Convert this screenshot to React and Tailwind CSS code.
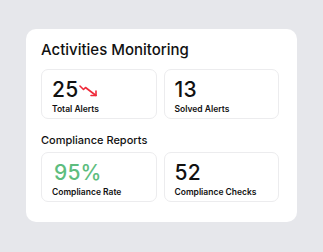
const font = { fontFamily: 'Inter, "Noto Sans", sans-serif' }

function TrendDown() {
  return (
    <svg width="19" height="13" viewBox="0 0 19 13" fill="none" stroke="#ef2a3a" strokeWidth="1.6" strokeLinecap="round" strokeLinejoin="round" className="mb-[5px]">
      <polyline points="1,2 4.5,5.5 6.5,3.5 17,11.5" />
      <polyline points="12,11.5 17,11.5 17,7" />
    </svg>
  )
}

function Stat({ value, label, valueClass = 'text-[#111]', icon }) {
  return (
    <div className="h-[50px] rounded-[7px] border border-[#ececee] bg-white pl-[10px] pt-[8px]">
      <div className="flex items-end gap-[1px]">
        <span className={`text-[21px] leading-[24px] font-medium tracking-[0.2px] ${valueClass}`}>{value}</span>
        {icon}
      </div>
      <div className="mt-[2px] text-[8.5px] leading-[11px] font-semibold text-[#111]">{label}</div>
    </div>
  )
}

export default function App() {
  return (
    <div className="w-[323px] h-[252px] bg-[#e6e7eb] pt-[29px] pl-[26px]" style={font}>
      <div className="w-[271px] h-[193px] rounded-[10px] bg-white px-[15px] pt-[11px]">
        <h1 className="text-[15px] leading-[20px] font-medium text-[#111]">Activities Monitoring</h1>

        <div className="mt-[9px] grid grid-cols-2 gap-[7px] pr-[3px]">
          <Stat value="25" label="Total Alerts" icon={<TrendDown />} />
          <Stat value="13" label="Solved Alerts" />
        </div>

        <h2 className="mt-[14px] text-[11px] leading-[14px] font-medium text-[#111]">Compliance Reports</h2>

        <div className="mt-[5px] grid grid-cols-2 gap-[7px] pr-[3px]">
          <Stat value={<span className="ml-[2px]">95%</span>} label="Compliance Rate" valueClass="text-[#5dbd7e]" />
          <Stat value="52" label="Compliance Checks" />
        </div>
      </div>
    </div>
  )
}
